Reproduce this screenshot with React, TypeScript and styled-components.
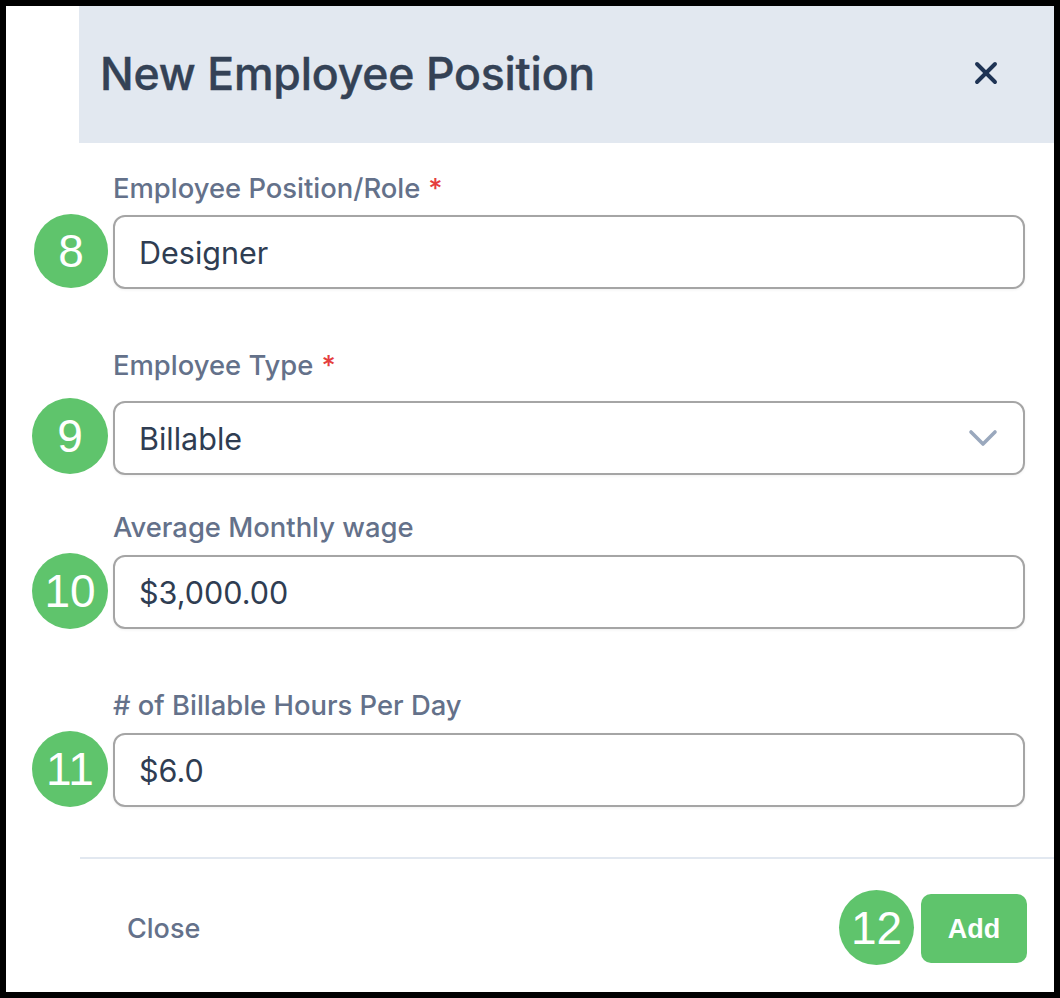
import React from 'react'
import styled, { createGlobalStyle } from 'styled-components'
import { X, ChevronDown } from 'lucide-react'

const GlobalStyle = createGlobalStyle`
  html, body {
    margin: 0;
    padding: 0;
    background: #fff;
  }
  * {
    box-sizing: border-box;
  }
`

const FIELDS = [
  { id: 8, label: 'Employee Position/Role', required: true, value: 'Designer', top: 30, labelGap: 12, badge: 74, lift: 2 },
  { id: 9, label: 'Employee Type', required: true, value: 'Billable', select: true, top: 61, labelGap: 21, badge: 76, lift: 4 },
  { id: 10, label: 'Average Monthly wage', value: '$3,000.00', top: 37, labelGap: 13, badge: 76, lift: 2 },
  { id: 11, label: '# of Billable Hours Per Day', value: '$6.0', top: 61, labelGap: 13, badge: 76, lift: 2 },
]

export default function App() {
  return (
    <>
      <GlobalStyle />
      <Frame>
        <Header>
          <Title>New Employee Position</Title>
          <CloseIcon aria-label="Close">
            <X size={36} strokeWidth={2.6} />
          </CloseIcon>
        </Header>

        <Form>
          {FIELDS.map((field) => (
            <Field key={field.id} $top={field.top}>
              <Label $gap={field.labelGap}>
                {field.label}
                {field.required && <Required>*</Required>}
              </Label>
              <Row>
                <Badge $size={field.badge} $lift={field.lift}>
                  {field.id}
                </Badge>
                <Control>
                  {field.value}
                  {field.select && (
                    <Chevron>
                      <ChevronDown size={48} strokeWidth={1.8} />
                    </Chevron>
                  )}
                </Control>
              </Row>
            </Field>
          ))}
        </Form>

        <Footer>
          <CloseLink>Close</CloseLink>
          <Actions>
            <Badge $size={75} $lift={2}>
              12
            </Badge>
            <AddButton>Add</AddButton>
          </Actions>
        </Footer>
      </Frame>
    </>
  )
}

const Frame = styled.div`
  width: 1060px;
  height: 998px;
  border: 6px solid #000;
  background: #fff;
  font-family: Inter, 'Liberation Sans', sans-serif;
  display: flex;
  flex-direction: column;
  overflow: hidden;
`

const Header = styled.header`
  margin-left: 73px;
  height: 137px;
  flex: none;
  background: #e2e8f0;
  display: flex;
  align-items: center;
  justify-content: space-between;
  padding: 0 50px 0 21px;
`

const Title = styled.h1`
  margin: 0;
  font-size: 44.6px;
  font-weight: 500;
  line-height: 1.2;
  letter-spacing: -0.2px;
  color: #344256;
  -webkit-text-stroke: 0.4px #344256;
`

const CloseIcon = styled.span`
  display: flex;
  margin-bottom: 4px;
  color: #1e3354;
`

const Form = styled.div`
  padding-right: 29px;
  flex: none;
`

const Field = styled.div<{ $top: number }>`
  margin-top: ${({ $top }) => $top}px;
`

const Label = styled.div<{ $gap: number }>`
  padding-left: 107px;
  margin-bottom: ${({ $gap }) => $gap}px;
  font-size: 27.4px;
  line-height: 30px;
  font-weight: 500;
  color: #64718a;
`

const Required = styled.span`
  margin-left: 8px;
  color: #e53e3e;
`

const Row = styled.div`
  display: grid;
  grid-template-columns: 107px 1fr;
  grid-template-rows: 74px;
  align-items: center;
`

const Badge = styled.div<{ $size: number; $lift: number }>`
  width: ${({ $size }) => $size}px;
  height: ${({ $size }) => $size}px;
  justify-self: end;
  margin-right: 5px;
  margin-bottom: ${({ $lift }) => $lift}px;
  flex: none;
  border-radius: 50%;
  background: #5fc46c;
  color: #fff;
  font-family: 'Liberation Sans', Arial, sans-serif;
  font-size: 46px;
  display: flex;
  align-items: center;
  justify-content: center;
`

const Control = styled.div`
  height: 74px;
  border: 2px solid #a5a5a5;
  border-radius: 12px;
  padding: 0 24px;
  display: flex;
  align-items: center;
  justify-content: space-between;
  font-size: 30.5px;
  color: #2f3d52;
  box-shadow: 0 1px 3px rgba(0, 0, 0, 0.06);
  background: #fff;
`

const Chevron = styled.span`
  display: flex;
  margin-right: -8px;
  color: #9aa8bd;
`

const Footer = styled.footer`
  margin: 50px 0 0 74px;
  border-top: 2px solid #e2e8f0;
  padding: 31px 27px 0 47px;
  display: flex;
  align-items: center;
  justify-content: space-between;
`

const CloseLink = styled.span`
  font-size: 27px;
  font-weight: 500;
  color: #64718a;
`

const Actions = styled.div`
  display: flex;
  align-items: center;
  gap: 2px;
`

const AddButton = styled.button`
  width: 106px;
  height: 69px;
  border: 0;
  border-radius: 10px;
  padding: 2px 0 0;
  background: #5fc46c;
  color: #fff;
  font-family: 'Liberation Sans', Arial, sans-serif;
  font-size: 27px;
  font-weight: 700;
`
